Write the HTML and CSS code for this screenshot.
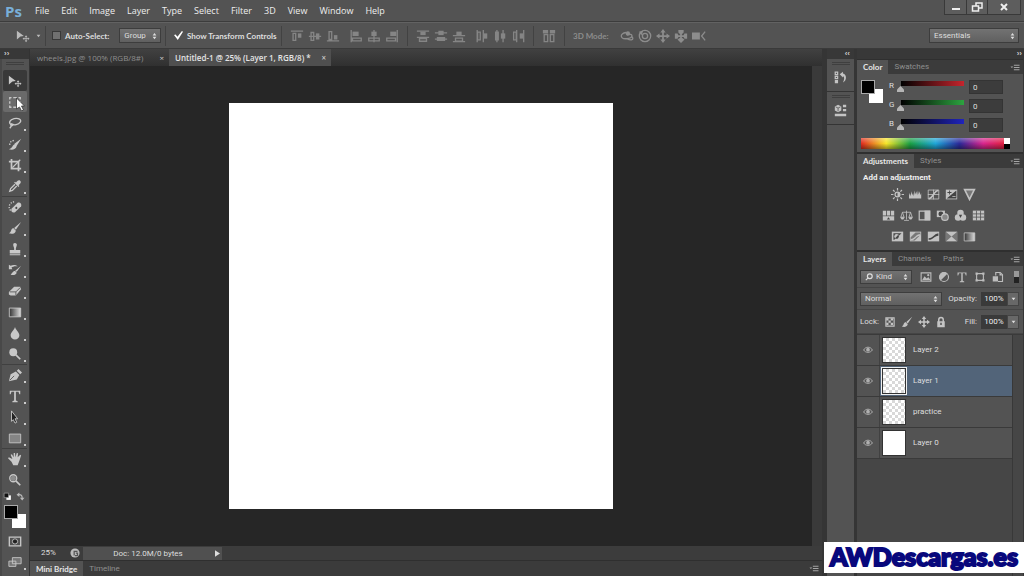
FILE: index.html
```html
<!DOCTYPE html>
<html lang="en">
<head>
<meta charset="utf-8">
<title>Untitled-1 @ 25%</title>
<link rel="stylesheet" href="styles.css">
</head>
<body>
<svg class="sprite" aria-hidden="true">
  <defs>
    <linearGradient id="fade"><stop offset="0" stop-color="#333"/><stop offset="1" stop-color="#ddd"/></linearGradient>
  </defs>
  <symbol id="move" viewBox="0 0 16 16"><path d="M1 2l8 6-4 .6L1 12z"/><path d="M11.500 7l1.500 2h-1v1.500h1.500v-1l2 1.500-2 1.500v-1H12V13h1l-1.500 2-1.500-2h1v-1.500H9.500v1l-2-1.500 2-1.500v1H11V9h-1z"/></symbol>
  <symbol id="marquee" viewBox="0 0 16 16"><path class="ln" d="M2 5V3h2M6 3h4M12 3h2v2M14 7v3M14 12v2h-2M10 14H6M4 14H2v-2M2 10V7"/></symbol>
  <symbol id="lasso" viewBox="0 0 16 16"><path class="ln" d="M4 10C0 8 2 4 7 3s9 1 7 4-7 4-10 2c-2 1 0 3 1 2s0-2-1-2c0 3-1 4-2 5"/></symbol>
  <symbol id="quick" viewBox="0 0 16 16"><path d="M15 2l-5 8-3-2zM8 8l2 2c-1 5-6 5-9 4 4-1 4-5 7-6z"/><path class="ln" stroke-dasharray="1.500 1.500" d="M2 9c0-3 2-5 5-5"/></symbol>
  <symbol id="crop" viewBox="0 0 16 16"><path class="ln bold" d="M4 1v11h11M1 4h11v11"/><path class="ln" d="M14 2L5 11"/></symbol>
  <symbol id="dropper" viewBox="0 0 16 16"><path d="M11 2c2-2 5 1 3 3l-2 2 1 1-1 1-5-5 1-1 1 1z"/><path class="ln" d="M8 6l-5 5-1 3 3-1 5-5"/></symbol>
  <symbol id="heal" viewBox="0 0 16 16"><path d="M4 10l7-7c2-1 5 1 4 4l-7 7c-3 1-5-1-4-4z"/><path class="ln" stroke-dasharray="1.500 1.500" d="M3 12C0 9 1 3 7 2"/><path class="dk" d="M8 9l1.500-1.500L11 9l-1.500 1.500z"/></symbol>
  <symbol id="brush" viewBox="0 0 16 16"><path d="M15 1L9 10 7 8zM6 8l3 3c-1 4-5 4-8 3 3-1 2-5 5-6z"/></symbol>
  <symbol id="stamp" viewBox="0 0 16 16"><path d="M6 2c2-2 5 0 4 2l-1 3v2h5v4H2V9h5V7L6 4zM2 14h12v1H2z"/></symbol>
  <symbol id="history" viewBox="0 0 16 16"><path d="M15 3l-5 7-2-1zM8 9l2 2c-1 3-5 3-7 2 2-1 2-4 5-4zM1 2l2 1c3-1 6-1 8 1-3-1-5 0-7 1l1 2H1z"/></symbol>
  <symbol id="eraser" viewBox="0 0 16 16"><path d="M1 9l6-6h7l1 3-6 7H3l-2-1z"/><path class="ln dkline thin" d="M2 9h7l5-5M9 9v4"/></symbol>
  <symbol id="grad" viewBox="0 0 16 16"><path fill="url(#fade)" stroke="currentColor" d="M1.500 3.500h13v10h-13z"/></symbol>
  <symbol id="drop" viewBox="0 0 16 16"><path d="M8 1c1 4 5 6 5 9.500a5 5 0 0 1-10 0C3 7 7 5 8 1z"/></symbol>
  <symbol id="dodge" viewBox="0 0 16 16"><circle cx="6" cy="6" r="4.500"/><path class="ln bold" d="M9 9l5 5"/></symbol>
  <symbol id="pen" viewBox="0 0 16 16"><path d="M1 15l2-8 6-3 4 4-3 5zM10 3l2-2 4 4-2 2z"/><path class="ln dkline thin" d="M2 14l5-5"/></symbol>
  <symbol id="type" viewBox="0 0 16 16"><path d="M2 2h12v4h-1l-1-3H9v10l2 1v1H5v-1l2-1V3H4L3 6H2z"/></symbol>
  <symbol id="path" viewBox="0 0 16 16"><path fill="#222" stroke="currentColor" d="M4 1l7 9H8l2 4-2 1-2-4-2 2z"/></symbol>
  <symbol id="rect" viewBox="0 0 16 16"><path fill="#858585" stroke="currentColor" d="M1.500 3.500h13v10h-13z"/></symbol>
  <symbol id="hand" viewBox="0 0 16 16"><path d="M4 11L0 7l1-1 4 2-2-5 1.500-.5L6.500 6V1H8l.5 5 1.500-5 1.500.5L11 6l3-3 1 1-2 6-2 5H6z"/></symbol>
  <symbol id="lens" viewBox="0 0 16 16"><circle class="ln" cx="6" cy="6" r="4"/><circle opacity=".5" cx="6" cy="6" r="3"/><path class="ln bold" d="M9 9l5 5"/></symbol>
  <symbol id="mask" viewBox="0 0 16 16"><path class="ln" d="M1.500 3.500h13v10h-13z"/><circle fill="#222" stroke="currentColor" cx="8" cy="8.500" r="3"/></symbol>
  <symbol id="screen" viewBox="0 0 16 16"><path fill="#777" stroke="currentColor" d="M5 3h10v7H5zM1 7h8v6H1z"/></symbol>
  <symbol id="mini" viewBox="0 0 16 16"><path fill="#fff" d="M6 6h8v8H6z"/><path fill="#111" stroke="currentColor" d="M2 2h8v8H2z"/></symbol>
  <symbol id="swap" viewBox="0 0 16 16"><path class="ln bold" d="M4 5c5-1 7 1 7 6"/><path d="M1 5l5-4v8zM7 10h8l-4 5z"/></symbol>
  <symbol id="at" viewBox="0 0 16 16"><path class="ln" d="M1 2.500h14M3.500 5v8h3V5z"/><path d="M9 5h4v5H9z"/></symbol>
  <symbol id="am" viewBox="0 0 16 16"><path class="ln" d="M1 8.500h14M3.500 4v9h3V4z"/><path d="M9 5h4v7H9z"/></symbol>
  <symbol id="ab" viewBox="0 0 16 16"><path class="ln" d="M1 13.500h14M3.500 3v9h3V3z"/><path d="M9 7h4v5H9z"/></symbol>
  <symbol id="al" viewBox="0 0 16 16"><path class="ln" d="M2.500 1v14M4 10.500h10v3H4z"/><path d="M4 3h7v5H4z"/></symbol>
  <symbol id="ac" viewBox="0 0 16 16"><path class="ln" d="M8 1v14M2 10.500h12v3H2z"/><path d="M5 3h6v5H5z"/></symbol>
  <symbol id="ar" viewBox="0 0 16 16"><path class="ln" d="M14 1v14M2 10.500h10v3H2z"/><path d="M6 3h7v5H6z"/></symbol>
  <symbol id="dt" viewBox="0 0 16 16"><path class="ln" d="M1 2.500h14M1 9.500h14M4 11h8v3H4z"/><path d="M5 3h6v4H5z"/></symbol>
  <symbol id="dm" viewBox="0 0 16 16"><path class="ln" d="M1 4.500h14M1 11.500h14M4 10h8v3H4z"/><path d="M5 2h6v5H5z"/></symbol>
  <symbol id="db" viewBox="0 0 16 16"><path class="ln" d="M1 7.500h14M1 14.500h14M4 10.500h8V14H4z"/><path d="M5 3h6v4H5z"/></symbol>
  <symbol id="dl" viewBox="0 0 16 16"><path class="ln" d="M2.500 1v14M9.500 1v14M3 3.500h3v9H3z"/><path d="M10 5h4v6h-4z"/></symbol>
  <symbol id="dc" viewBox="0 0 16 16"><path class="ln" d="M4.500 1v14M11.500 1v14M3 3.500h3v9H3z"/><path d="M9 5h5v6H9z"/></symbol>
  <symbol id="dr" viewBox="0 0 16 16"><path class="ln" d="M6.500 1v14M14.500 1v14M3 3.500h3v9H3z"/><path d="M10 5h4v6h-4z"/></symbol>
  <symbol id="auto" viewBox="0 0 16 16"><path class="ln" d="M2.500 6.500h4v8h-4zM9.500 6.500h4v8h-4z"/><path d="M1 1h6v4H1zM9 1h6v4H9z"/></symbol>
  <symbol id="orbit" viewBox="0 0 16 16"><path class="ln" d="M7 4C-1 5 0 12 8 11s7-7 0-4M8 11c5 3 8 1 6-2"/><circle cx="9" cy="5" r="2.500"/></symbol>
  <symbol id="roll" viewBox="0 0 16 16"><circle class="ln" cx="8" cy="8" r="6.500"/><circle class="ln" cx="8" cy="8" r="3"/><path d="M1 3l5-1-2 5z"/></symbol>
  <symbol id="pan" viewBox="0 0 16 16"><path d="M8 0l3 4H9v3h3V5l4 3-4 3V9H9v3h2l-3 4-3-4h2V9H4v2L0 8l4-3v2h3V4H5z"/></symbol>
  <symbol id="slide" viewBox="0 0 16 16"><path d="M5 1h6v3L9 6v1h2l1-2h3v6h-3l-1-2H9v1l3 2-4 4-4-4 3-2V9H5l-1 2H1V5h3l1 2h2V6L5 4z"/></symbol>
  <symbol id="cam" viewBox="0 0 16 16"><path d="M0 4h9v8H0z"/><path class="ln" d="M15 3l-4 5 4 5"/></symbol>
  <symbol id="menu" viewBox="0 0 16 16"><path d="M0 6h5L2.500 9zM6 3h10v2H6zM6 7h10v2H6zM6 11h10v2H6z"/></symbol>
  <symbol id="updn" viewBox="0 0 8 12"><path d="M4 1l3 4H1zM4 11l3-4H1z"/></symbol>
  <symbol id="down" viewBox="0 0 8 6"><path d="M1 1h6L4 5z"/></symbol>
  <symbol id="eye" viewBox="0 0 16 16"><path class="ln" d="M1 8c3-6 11-6 14 0-3 5-11 5-14 0z"/><circle cx="8" cy="7.500" r="3"/></symbol>
  <symbol id="sun" viewBox="0 0 16 16"><circle class="ln" cx="8" cy="8" r="3"/><path d="M8 5a3 3 0 0 1 0 6z"/><path class="ln" d="M8 0v3M8 13v3M0 8h3M13 8h3M2.500 2.500l2 2M11.500 11.500l2 2M13.500 2.500l-2 2M4.500 11.500l-2 2"/></symbol>
  <symbol id="levels" viewBox="0 0 16 16"><path d="M0 13V9l1-3 1 4 1-6 1 5 1-3 1 4 1-7 1 5 1-4 1 5 1-6 1 5 1-4 1 5 1-3v7z"/></symbol>
  <symbol id="curves" viewBox="0 0 16 16"><path class="ln thin" d="M1.500 2.500h13v11h-13zM1 8h14M8 2v12"/><path class="ln bold" d="M2 13c6 0 6-10 12-10"/></symbol>
  <symbol id="expo" viewBox="0 0 16 16"><path d="M1 2h14v12H1z"/><path class="dk" d="M2 13L14 3v10zM3 5h2V3h1v2h2v1H6v2H5V6H3z"/><path d="M9 10h4v1H9z"/></symbol>
  <symbol id="vib" viewBox="0 0 16 16"><path fill="#777" stroke="currentColor" stroke-width="2" d="M2 2h12L8 14z"/></symbol>
  <symbol id="hue" viewBox="0 0 16 16"><path d="M1 2h4v6H1zM6 2h4v6H6zM11 2h4v6h-4zM1 9h14v5H1z"/><path class="dk" d="M8 10l2 3H6z"/></symbol>
  <symbol id="balance" viewBox="0 0 16 16"><path class="ln thin" d="M8 2v11M3 4h10M3 4l-2 6h4zM13 4l-2 6h4zM5 14h6"/><path d="M0 10h6l-2 3H2zM10 10h6l-2 3h-2z"/></symbol>
  <symbol id="bw" viewBox="0 0 16 16"><path class="ln" d="M1.500 2.500h13v11h-13z"/><path d="M8 2h7v12H8z"/></symbol>
  <symbol id="photo" viewBox="0 0 16 16"><path d="M1 2h10v8H1z"/><circle class="dk" cx="6" cy="6" r="3"/><circle fill="#888" stroke="currentColor" stroke-width="1.500" cx="11" cy="10" r="4"/></symbol>
  <symbol id="mixer" viewBox="0 0 16 16"><circle cx="8" cy="5" r="4"/><circle cx="5" cy="10.500" r="4"/><circle cx="11" cy="10.500" r="4"/><path class="dk" d="M6 7h4l-2 4z"/></symbol>
  <symbol id="lut" viewBox="0 0 16 16"><path d="M1 2h14v12H1z"/><path class="ln dkline thin" d="M1 6h14M1 10h14M5.500 2v12M10.500 2v12"/></symbol>
  <symbol id="invert" viewBox="0 0 16 16"><path d="M1 2h14v12H1z"/><path class="dk" d="M3 4h10L4 12H3z"/><circle cx="7" cy="8" r="3"/><path class="dk" d="M9 5.800a3 3 0 0 1-4 4.400z"/></symbol>
  <symbol id="poster" viewBox="0 0 16 16"><path d="M1 2h14v12H1z"/><path fill="#777" d="M2 9l6-6h6v3l-7 7H2z"/><path d="M2 11c6 0 6-6 12-6v2C8 7 8 13 2 13z"/></symbol>
  <symbol id="thresh" viewBox="0 0 16 16"><path d="M1 2h14v12H1z"/><path class="dk" d="M2 10c6 0 6-5 12-6v3C9 7 8 12 2 12z"/></symbol>
  <symbol id="selcol" viewBox="0 0 16 16"><path d="M1 2h14v12H1z"/><path fill="#777" d="M1 2l7 6-7 6zM15 2L8 8l7 6z"/></symbol>
  <symbol id="pic" viewBox="0 0 16 16"><path class="ln" d="M1.500 2.500h13v11h-13z"/><path d="M3 12l3-5 3 3 2-2 3 4z"/><circle cx="11" cy="5.500" r="1.500"/></symbol>
  <symbol id="half" viewBox="0 0 16 16"><circle class="ln" cx="8" cy="8" r="6"/><path d="M3.500 12.500A6 6 0 0 1 12.500 3.500z"/></symbol>
  <symbol id="shape" viewBox="0 0 16 16"><path class="ln" d="M3.500 3.500h9v9h-9z"/><path d="M2 2h3v3H2zM11 2h3v3h-3zM2 11h3v3H2zM11 11h3v3h-3z"/></symbol>
  <symbol id="smart" viewBox="0 0 16 16"><path class="ln" d="M5 6V2h6l3 3v9H8"/><path d="M1 7h7v7H1zM10 2l4 4h-4z"/></symbol>
  <symbol id="checker" viewBox="0 0 16 16"><path class="ln" d="M2.500 2.500h11v11h-11z"/><path d="M3 3h3v3H3zM9 3h3v3H9zM6 6h3v3H6zM3 9h3v3H3zM9 9h3v3H9z"/></symbol>
  <symbol id="lock" viewBox="0 0 16 16"><path class="ln bold" d="M5 8V5a3 3 0 0 1 6 0v3"/><path fill-rule="evenodd" d="M3 7h10v8H3zM7 9v3h2V9z"/></symbol>
  <symbol id="histpanel" viewBox="0 0 16 16"><path class="ln" d="M1.500 1.500h3v3h-3zM1.500 6.500h3v3h-3z"/><path d="M1 11h4v4H1zM7 4l4-3v2c5 1 5 9 0 11 2-4 2-7 0-8v2z"/></symbol>
  <symbol id="props" viewBox="0 0 16 16"><path d="M1 3l4-2 4 2v5l-4 2-4-2zM11 1h4v3h-4zM11 6h4v3h-4zM1 12h14v3H1z"/><path class="ln dkline thin" d="M2 3.500l3 1.500 3-1.500M5 5v4"/></symbol>
</svg>

<div class="app">
  <header class="menubar">
    <span class="logo">Ps</span>
    <nav class="menus">
      <button>File</button><button>Edit</button><button>Image</button><button>Layer</button><button>Type</button><button>Select</button><button>Filter</button><button>3D</button><button>View</button><button>Window</button><button>Help</button>
    </nav>
    <div class="winctl">
      <button aria-label="Minimize"><svg viewBox="0 0 12 10"><path d="M2 6h8v2H2z"/></svg></button>
      <button aria-label="Restore"><svg viewBox="0 0 12 10"><path class="ln" d="M5 4V1h6v5H8M1.500 4h6v5h-6z"/></svg></button>
      <button class="wide" aria-label="Close"><svg viewBox="0 0 12 10"><path class="ln bold" d="M3 2l6 6M9 2L3 8"/></svg></button>
    </div>
  </header>

  <div class="options">
    <div class="og current"><svg class="i"><use href="#move"/></svg><svg class="dn"><use href="#down"/></svg></div>
    <div class="og auto">
      <label class="check"><input type="checkbox">Auto-Select:</label>
      <span class="pick group"><select aria-label="Auto-select target"><option>Group</option></select><svg><use href="#updn"/></svg></span>
    </div>
    <div class="og transform"><label class="check"><input type="checkbox" checked>Show Transform Controls</label></div>
    <div class="og icons">
      <span class="trio"><svg class="i"><use href="#at"/></svg><svg class="i"><use href="#am"/></svg><svg class="i"><use href="#ab"/></svg></span>
      <span class="trio"><svg class="i"><use href="#al"/></svg><svg class="i"><use href="#ac"/></svg><svg class="i"><use href="#ar"/></svg></span>
    </div>
    <div class="og icons">
      <span class="trio"><svg class="i"><use href="#dt"/></svg><svg class="i"><use href="#dm"/></svg><svg class="i"><use href="#db"/></svg></span>
      <span class="trio"><svg class="i"><use href="#dl"/></svg><svg class="i"><use href="#dc"/></svg><svg class="i"><use href="#dr"/></svg></span>
    </div>
    <div class="og icons"><svg class="i"><use href="#auto"/></svg></div>
    <div class="og icons mode"><span>3D Mode:</span>
      <span class="trio"><svg class="i"><use href="#orbit"/></svg><svg class="i"><use href="#roll"/></svg><svg class="i"><use href="#pan"/></svg><svg class="i"><use href="#slide"/></svg><svg class="i"><use href="#cam"/></svg></span>
    </div>
    <span class="pick workspace"><select aria-label="Workspace"><option>Essentials</option></select><svg><use href="#updn"/></svg></span>
  </div>

  <main class="work">
    <aside class="toolbar">
      <div class="strip">››</div>
      <div class="tools">
        <div class="grip"></div>
        <div class="tg">
          <button class="active" aria-label="Move"><svg><use href="#move"/></svg></button>
          <button class="hover" aria-label="Marquee"><svg><use href="#marquee"/></svg>
            <svg class="cursor" viewBox="0 0 10 14"><path fill="#fff" stroke="#333" stroke-width=".8" d="M1 1l8 8H6l2 4-2 1-2-4-3 2z"/></svg></button>
          <button class="more" aria-label="Lasso"><svg><use href="#lasso"/></svg></button>
          <button class="more" aria-label="Quick selection"><svg><use href="#quick"/></svg></button>
          <button class="more" aria-label="Crop"><svg><use href="#crop"/></svg></button>
          <button class="more" aria-label="Eyedropper"><svg><use href="#dropper"/></svg></button>
        </div>
        <div class="tg">
          <button class="more" aria-label="Healing brush"><svg><use href="#heal"/></svg></button>
          <button class="more" aria-label="Brush"><svg><use href="#brush"/></svg></button>
          <button class="more" aria-label="Clone stamp"><svg><use href="#stamp"/></svg></button>
          <button class="more" aria-label="History brush"><svg><use href="#history"/></svg></button>
          <button class="more" aria-label="Eraser"><svg><use href="#eraser"/></svg></button>
          <button class="more" aria-label="Gradient"><svg><use href="#grad"/></svg></button>
          <button class="more" aria-label="Blur"><svg><use href="#drop"/></svg></button>
          <button class="more" aria-label="Dodge"><svg><use href="#dodge"/></svg></button>
        </div>
        <div class="tg">
          <button class="more" aria-label="Pen"><svg><use href="#pen"/></svg></button>
          <button class="more" aria-label="Type"><svg><use href="#type"/></svg></button>
          <button class="more" aria-label="Path selection"><svg><use href="#path"/></svg></button>
          <button class="more" aria-label="Rectangle"><svg><use href="#rect"/></svg></button>
        </div>
        <div class="tg">
          <button class="more" aria-label="Hand"><svg><use href="#hand"/></svg></button>
          <button aria-label="Zoom"><svg><use href="#lens"/></svg></button>
        </div>
        <div class="minis"><svg><use href="#mini"/></svg><svg><use href="#swap"/></svg></div>
        <div class="fgbg"><i class="fg"></i><i class="bg"></i></div>
        <button aria-label="Quick mask"><svg><use href="#mask"/></svg></button>
        <button class="more" aria-label="Screen mode"><svg><use href="#screen"/></svg></button>
      </div>
    </aside>

    <section class="doc">
      <div class="doctabs">
        <div class="dtab"><span>wheels.jpg @ 100% (RGB/8#)</span><button aria-label="Close wheels.jpg">×</button></div>
        <div class="dtab on"><span>Untitled-1 @ 25% (Layer 1, RGB/8) *</span><button aria-label="Close Untitled-1">×</button></div>
      </div>
      <div class="stage"><div class="canvas"></div></div>
      <div class="status">
        <span class="zoomlevel">25%</span>
        <span class="share"><svg viewBox="0 0 12 12"><circle cx="6" cy="6" r="5.500"/><path class="ln dkline" d="M5 9V4h4M7 6h2v3H6"/></svg></span>
        <span class="docinfo">Doc: 12.0M/0 bytes</span>
        <button aria-label="Status options"><svg viewBox="0 0 6 8"><path d="M0 0l6 4-6 4z"/></svg></button>
      </div>
      <div class="tabs bottom"><button class="on">Mini Bridge</button><button>Timeline</button><svg class="pm"><use href="#menu"/></svg></div>
    </section>

    <aside class="dock">
      <div class="strip">‹‹</div>
      <div class="dockcell"><div class="grip"></div><svg><use href="#histpanel"/></svg></div>
      <div class="dockcell"><div class="grip"></div><svg><use href="#props"/></svg></div>
      <div class="dockrest"></div>
    </aside>

    <aside class="panels">
      <div class="strip">››</div>
      <section class="panel">
        <div class="tabs"><button class="on">Color</button><button>Swatches</button><svg class="pm"><use href="#menu"/></svg></div>
        <div class="color">
          <div class="fgbg"><i class="fg"></i><i class="bg"></i></div>
          <div class="channels">
            <label for="r">R</label><input class="red" id="r" type="range" min="0" max="255" value="0"><input type="text" value="0" aria-label="Red value">
            <label for="g">G</label><input class="green" id="g" type="range" min="0" max="255" value="0"><input type="text" value="0" aria-label="Green value">
            <label for="b">B</label><input class="blue" id="b" type="range" min="0" max="255" value="0"><input type="text" value="0" aria-label="Blue value">
          </div>
        </div>
        <div class="spectrum"><i></i></div>
      </section>
      <section class="panel">
        <div class="tabs"><button class="on">Adjustments</button><button>Styles</button><svg class="pm"><use href="#menu"/></svg></div>
        <div class="adjust">
          <h2>Add an adjustment</h2>
          <div class="arow"><svg><use href="#sun"/></svg><svg><use href="#levels"/></svg><svg><use href="#curves"/></svg><svg><use href="#expo"/></svg><svg><use href="#vib"/></svg></div>
          <div class="arow"><svg><use href="#hue"/></svg><svg><use href="#balance"/></svg><svg><use href="#bw"/></svg><svg><use href="#photo"/></svg><svg><use href="#mixer"/></svg><svg><use href="#lut"/></svg></div>
          <div class="arow"><svg><use href="#invert"/></svg><svg><use href="#poster"/></svg><svg><use href="#thresh"/></svg><svg><use href="#selcol"/></svg><svg><use href="#grad"/></svg></div>
        </div>
      </section>
      <section class="panel layers">
        <div class="tabs"><button class="on">Layers</button><button>Channels</button><button>Paths</button><svg class="pm"><use href="#menu"/></svg></div>
        <div class="lrow filter">
          <span class="pick kind"><svg class="mag" viewBox="0 0 10 10"><circle class="ln" cx="6" cy="4" r="3"/><path class="ln" d="M4 6L1 9"/></svg><select aria-label="Filter type"><option>Kind</option></select><svg><use href="#updn"/></svg></span>
          <span class="ficons"><svg><use href="#pic"/></svg><svg><use href="#half"/></svg><svg><use href="#type"/></svg><svg><use href="#shape"/></svg><svg><use href="#smart"/></svg></span>
          <i class="toggle"></i>
        </div>
        <div class="lrow">
          <span class="pick blend"><select aria-label="Blend mode"><option>Normal</option></select><svg><use href="#updn"/></svg></span>
          <label class="num">Opacity:<input type="text" value="100%"></label><button class="drop" aria-label="Opacity slider"><svg><use href="#down"/></svg></button>
        </div>
        <div class="lrow locking">
          <span>Lock:</span>
          <span class="locks"><svg><use href="#checker"/></svg><svg><use href="#brush"/></svg><svg><use href="#pan"/></svg><svg><use href="#lock"/></svg></span>
          <label class="num">Fill:<input type="text" value="100%"></label><button class="drop" aria-label="Fill slider"><svg><use href="#down"/></svg></button>
        </div>
        <div class="listwrap">
          <ul class="list">
            <li><span class="vis"><svg><use href="#eye"/></svg></span><i class="thumb"></i><span>Layer 2</span></li>
            <li class="sel"><span class="vis"><svg><use href="#eye"/></svg></span><i class="thumb"></i><span>Layer 1</span></li>
            <li><span class="vis"><svg><use href="#eye"/></svg></span><i class="thumb"></i><span>practice</span></li>
            <li><span class="vis"><svg><use href="#eye"/></svg></span><i class="thumb solid"></i><span>Layer 0</span></li>
          </ul>
          <div class="scroll"></div>
        </div>
      </section>
    </aside>
  </main>
  <div class="watermark">AWDescargas.es</div>
</div>
</body>
</html>
```
FILE: styles.css
```css
* { box-sizing: border-box; }
body { margin: 0; background: #535353; color: #dedede; font: 8px/12px Roboto, "Liberation Sans", sans-serif; }
button, input, select { font: inherit; color: inherit; margin: 0; padding: 0; border: 0; background: none; border-radius: 0; }
svg { fill: currentColor; flex: none; display: block; }
.ln { fill: none; stroke: currentColor; stroke-width: 1.5; }
.bold { stroke-width: 2; }
.thin { stroke-width: 1; }
.dk { fill: #444; }
.dkline { stroke: #555; }
.sprite { position: absolute; width: 0; height: 0; }
i { display: block; }

.app { height: 100vh; display: flex; flex-direction: column; overflow: hidden; position: relative; }

.menubar { height: 22px; display: flex; flex: none; align-items: center; border-bottom: 1px solid #3c3c3c; background: #535353; }
.logo { width: 29px; padding-left: 5px; font: bold 15px/20px "Open Sans", sans-serif; color: #79afd9; }
.menus { display: flex; flex: 1; font: 9px/20px "Open Sans", sans-serif; color: #eee; }
.menus button { padding: 0 6px; }
.winctl { display: flex; align-self: flex-start; height: 15px; margin-right: 3px; border: 1px solid #393939; border-top: 0; background: #5d5d5d; color: #eee; }
.winctl button { width: 21px; display: grid; place-items: center; }
.winctl button + button { border-left: 1px solid #393939; }
.winctl .wide { width: 33px; }
.winctl svg { width: 12px; height: 10px; }

.options { height: 27px; flex: none; display: flex; align-items: center; border-top: 1px solid #626262; border-bottom: 1px solid #3a3a3a; padding-right: 5px; }
.og { display: flex; align-items: center; height: 20px; border-right: 1px solid #424242; }
.i { width: 14px; height: 14px; }
.current { width: 46px; padding-left: 16px; gap: 6px; color: #bbb; }
.dn { width: 5px; height: 4px; }
.auto { width: 120px; padding-left: 6px; gap: 10px; }
.transform { width: 116px; padding-left: 8px; }
.check { display: flex; align-items: center; gap: 4px; font: bold 8px/12px Lato, sans-serif; white-space: nowrap; }
.check input { appearance: none; width: 9px; height: 9px; background: #707070; border: 1px solid #383838; }
.check input:checked { background: #fff; border: 0; clip-path: polygon(0 45%, 18% 38%, 38% 65%, 88% 0, 100% 8%, 42% 100%); }
.pick { display: flex; align-items: center; position: relative; height: 15px; background: linear-gradient(#727272, #606060); border: 1px solid #3d3d3d; padding: 0 3px 0 4px; }
.pick select { appearance: none; flex: 1; min-width: 0; outline: 0; }
.pick svg { width: 5px; height: 8px; }
.pick .mag { width: 8px; height: 8px; margin-right: 3px; }
.group { width: 42px; }
.icons { gap: 9px; padding: 0 8px; color: #858585; }
.trio { display: flex; gap: 4px; }
.mode { border: 0; gap: 11px; flex: 1; color: #8c8c8c; }
.mode > span:first-child { font: bold 8px/12px Lato, sans-serif; }
.workspace { width: 90px; }

.work { flex: 1; min-height: 0; display: flex; background: #3a3a3a; }
.strip { height: 10px; flex: none; background: #383838; color: #ccc; font: bold 8px/9px "Liberation Sans", sans-serif; padding: 0 4px; }
.grip { height: 3px; width: 18px; margin: 0 auto; border-top: 1px solid #3f3f3f; border-bottom: 1px solid #3f3f3f; }

.toolbar { width: 30px; flex: none; display: flex; flex-direction: column; background: #333; padding-right: 1px; }
.tools { flex: 1; background: #535353; border-left: 2px solid #484848; padding: 3px 2px 0 0; }
.tools .grip { margin-bottom: 5px; }
.tools button { width: 24px; height: 21px; margin: 0 auto; display: grid; place-items: center; position: relative; color: #c8c8c8; border-radius: 2px; }
.tools button svg { width: 14px; height: 14px; }
.tools .active { background: #393939; }
.tools .hover { background: #6a6a6a; }
.tools button .cursor { position: absolute; left: 12px; top: 6px; width: 11px; height: 14px; z-index: 1; }
.more::after { content: ""; position: absolute; right: 1px; bottom: 2px; width: 2px; height: 2px; background: #ccc; }
.tg + .tg { box-shadow: inset 0 1px #404040; }
.minis { display: flex; justify-content: space-between; padding: 2px 2px 0 1px; height: 15px; color: #bbb; }
.minis svg { width: 9px; height: 9px; }
.fgbg { display: grid; width: 22px; height: 23px; margin-left: 2px; }
.fgbg i { grid-area: 1 / 1; width: 14px; height: 14px; }
.fg { background: #000; border: 1px solid #aaa; z-index: 1; }
.bg { background: #fff; align-self: end; justify-self: end; }
.tools .fgbg { margin-bottom: 2px; }

.doc { flex: 1; min-width: 0; display: flex; flex-direction: column; background: #3a3a3a; }
.doctabs { height: 17px; flex: none; display: flex; background: linear-gradient(#414141, #303030); color: #8e8e8e; font: 8px/12px "Open Sans", sans-serif; }
.dtab { display: flex; align-items: center; justify-content: space-between; padding: 0 5px 0 7px; width: 139px; white-space: nowrap; }
.dtab.on { width: 162px; background: #4f4f4f; color: #e4e4e4; font-weight: 600; padding-left: 6px; }
.dtab button { color: #ccc; }
.stage { flex: 1; min-height: 0; margin-right: 10px; background: #262626; display: grid; place-items: center; }
.canvas { height: 84.500%; aspect-ratio: 384 / 405; background: #fff; }
.status { height: 14px; flex: none; display: flex; align-items: center; background: #3c3c3c; }
.zoomlevel { width: 37px; padding-left: 11px; }
.share { width: 16px; color: #bbb; display: grid; place-items: center; }
.share svg { width: 10px; height: 10px; }
.docinfo { width: 130px; background: #505050; text-align: center; line-height: 13px; }
.status button { background: #505050; width: 9px; height: 13px; display: grid; place-items: center; }
.status button svg { width: 5px; height: 7px; }

.tabs { height: 15px; flex: none; display: flex; align-items: stretch; background: #3b3b3b; color: #8f8f8f; border-top: 1px solid #2f2f2f; padding-right: 3px; }
.tabs button { padding: 0 6px; }
.tabs .on { background: #535353; color: #e6e6e6; font: bold 8px/12px Lato, sans-serif; }
.pm { width: 10px; height: 9px; margin: 3px 0 0 auto; color: #a5a5a5; }
.bottom { height: 16px; }

.dock { width: 35px; flex: none; display: flex; flex-direction: column; padding: 0 3px 0 5px; background: #353535; }
.dock .strip { text-align: right; }
.dockcell { height: 33px; background: #535353; border-bottom: 1px solid #343434; padding-top: 3px; }
.dockcell svg { width: 13px; height: 13px; margin: 6px auto 0; color: #c4c4c4; }
.dockrest { flex: 1; background: #535353; }

.panels { width: 167px; flex: none; display: flex; flex-direction: column; background: #353535; padding-right: 1px; }
.panels .strip { text-align: right; padding: 0 1px; }
.panel { background: #535353; border-bottom: 1px solid #2f2f2f; }
.color { display: flex; padding: 6px 20px 0 4px; gap: 6px; height: 64px; }
.channels { flex: 1; display: grid; grid-template-columns: 8px 1fr 34px; column-gap: 0; grid-auto-rows: 19px; }
.color .fgbg { margin: 0; }
.channels input[type=text] { height: 14px; width: 34px; background: #3c3c3c; border: 1px solid #343434; padding-left: 3px; }
.channels input[type=range] { appearance: none; height: 12px; width: auto; min-width: 0; margin-right: 5px; background-repeat: no-repeat; background-size: 100% 5px; background-position: 4px 1px; }
.red { background-image: linear-gradient(90deg, #000, #d22730); }
.green { background-image: linear-gradient(90deg, #000, #2fae43); }
.blue { background-image: linear-gradient(90deg, #000, #2226c8); }
.channels input[type=range]::-webkit-slider-thumb { appearance: none; width: 7px; height: 6px; margin-top: 6px; background: #b5b5b5; clip-path: polygon(50% 0, 100% 60%, 100% 100%, 0 100%, 0 60%); }
.spectrum { height: 11px; margin: 0 13px 3px 4px; display: flex; justify-content: flex-end; background: linear-gradient(#fff5, #fff0 50%, #0006), linear-gradient(90deg, #e02a20, #f6e62a 17%, #1ba044 33%, #1fa6d8 50%, #2c2a9a 66%, #d8268e 82%, #e5202a); }
.spectrum i { width: 6px; background: linear-gradient(#fff 50%, #000 50%); }

.adjust { height: 82px; padding-top: 4px; }
.adjust h2 { margin: 0 0 4px 6px; font-size: 8px; line-height: 12px; font-weight: 700; color: #eee; }
.arow { display: flex; justify-content: center; gap: 5px; height: 21px; padding-right: 13px; color: #c2c2c2; }
.arow svg { width: 13px; height: 13px; }

.layers { flex: 1; display: flex; flex-direction: column; border: 0; }
.lrow { display: flex; align-items: center; height: 22px; padding: 0 4px 0 3px; border-bottom: 1px solid #454545; }
.lrow.locking { height: 24px; }
.lrow .pick { height: 14px; }
.kind { width: 52px; }
.ficons { display: flex; flex: 1; gap: 6px; padding-left: 8px; color: #bcbcbc; }
.ficons svg, .locks svg { width: 12px; height: 12px; }
.toggle { width: 5px; height: 12px; background: linear-gradient(#999 50%, #222 50%); }
.blend { width: 82px; }
.num { display: flex; flex: 1; align-items: center; justify-content: flex-end; gap: 4px; }
.num input { width: 26px; height: 14px; background: #3a3a3a; text-align: center; color: #eee; }
.drop { width: 12px; height: 14px; background: #686868; border: 1px solid #444; display: grid; place-items: center; }
.drop svg { width: 5px; height: 4px; }
.locks { display: flex; gap: 5px; padding-left: 5px; color: #c4c4c4; }
.listwrap { flex: 1; display: flex; border-top: 1px solid #3a3a3a; background: #464646; }
.list { flex: 1; list-style: none; margin: 0; padding: 0; }
.list li { display: flex; align-items: center; height: 31px; border-bottom: 1px solid #3a3a3a; background: #535353; }
.vis { width: 23px; height: 30px; display: grid; place-items: center; border-right: 1px solid #414141; color: #b0b0b0; background: #535353; }
.vis svg { width: 10px; height: 10px; }
.thumb { width: 24px; height: 26px; margin: 0 7px 0 2px; border: 1px solid #333; background: repeating-conic-gradient(#d8d8d8 0 25%, #fff 0 50%) 0 0 / 6px 6px; }
.thumb.solid { background: #fff; }
.list .sel { background: #526479; }
.sel .thumb { outline: 1px solid #eee; }
.scroll { width: 11px; background: #464646; border-left: 1px solid #383838; }

.watermark { position: absolute; right: 0; bottom: 3px; width: 200px; height: 31px; background: #fff; color: #08087c; font: 900 25px/28px Lato, sans-serif; text-align: center; white-space: nowrap; -webkit-text-stroke: 2px #08087c; }
```
